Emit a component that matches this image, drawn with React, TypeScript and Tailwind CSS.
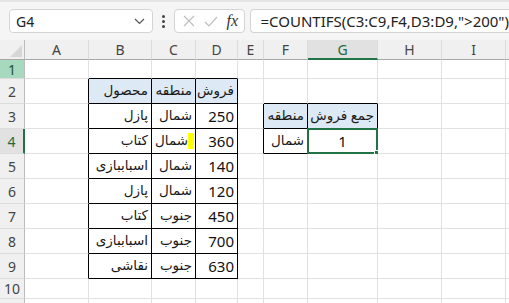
import React from 'react'

const COLS = ['', 'A', 'B', 'C', 'D', 'E', 'F', 'G', 'H', 'I', '']
const ROWS = [1, 2, 3, 4, 5, 6, 7, 8, 9, 10, 11]

// cell contents keyed "row-col" (col index: 1 = A)
const data: Record<string, string> = {
  '2-2': 'محصول', '2-3': 'منطقه', '2-4': 'فروش',
  '3-2': 'پازل', '3-3': 'شمال', '3-4': '250',
  '4-2': 'کتاب', '4-3': 'شمال', '4-4': '360',
  '5-2': 'اسباببازی', '5-3': 'شمال', '5-4': '140',
  '6-2': 'پازل', '6-3': 'شمال', '6-4': '120',
  '7-2': 'کتاب', '7-3': 'جنوب', '7-4': '450',
  '8-2': 'اسباببازی', '8-3': 'جنوب', '8-4': '700',
  '9-2': 'نقاشی', '9-3': 'جنوب', '9-4': '630',
  '3-6': 'منطقه', '3-7': 'جمع فروش',
  '4-6': 'شمال', '4-7': '1',
}

const tables = [
  { r1: 2, r2: 9, c1: 2, c2: 4 },
  { r1: 3, r2: 4, c1: 6, c2: 7 },
]

const inTable = (r: number, c: number) =>
  tables.some(t => r >= t.r1 && r <= t.r2 && c >= t.c1 && c <= t.c2)

const isHeaderFill = (r: number, c: number) =>
  (r === 2 && c >= 2 && c <= 4) || (r === 3 && c >= 6 && c <= 7)

const isArabic = (s: string) => /[\u0600-\u06FF]/.test(s)

function Cell({ r, c }: { r: number; c: number }) {
  const text = data[`${r}-${c}`]
  const rightBlack = inTable(r, c) || inTable(r, c + 1)
  const bottomBlack = inTable(r, c) || inTable(r + 1, c)
  const selected = r === 4 && c === 7
  const marked = r === 4 && c === 3

  return (
    <div
      className={`relative flex items-center overflow-visible whitespace-nowrap border-r border-b text-[#111] ${
        rightBlack ? 'border-r-black' : 'border-r-[#e1e1e1]'
      } ${bottomBlack ? 'border-b-black' : 'border-b-[#e1e1e1]'} ${
        isHeaderFill(r, c) ? 'bg-[#dde9f5]' : 'bg-white'
      } ${selected ? 'justify-center' : marked ? 'justify-end pr-[1px]' : 'justify-end pr-[3px]'}`}
    >
      {text && (
        <span
          dir="auto"
          className={`leading-none ${isArabic(text) ? 'text-[13.5px] text-[#1a1a1a]' : 'text-[15px]'}`}
        >
          {text}
        </span>
      )}
      {marked && <span className="inline-block h-[16px] w-[6px] shrink-0 bg-[#ffff00]" />}
      {selected && (
        <div className="pointer-events-none absolute -top-[1px] -left-[1px] right-[-1px] bottom-[-1px] border-2 border-[#217346]">
          <div className="absolute -right-[4px] -bottom-[4px] h-[6px] w-[6px] border border-white bg-[#217346]" />
        </div>
      )}
    </div>
  )
}

export default function App() {
  return (
    <div className="h-[303px] w-[509px] overflow-hidden bg-white font-['Noto_Sans','DejaVu_Sans',sans-serif]">
      {/* نوار فرمول */}
      <div className="flex h-[40px] items-center border-t-2 border-[#e6e6e6] bg-[#f5f5f5] pl-[9px]">
        <div className="flex h-[24px] w-[148px] items-center justify-between rounded-[4px] border border-[#d4d4d4] bg-white pl-[6px] pr-[7px]">
          <span className="text-[14px] text-[#222]">G4</span>
          <svg width="11" height="7" viewBox="0 0 11 7" fill="none" stroke="#555" strokeWidth="1.2">
            <path d="M1 1l4.5 4.5L10 1" />
          </svg>
        </div>
        <div className="mx-[9px] flex flex-col gap-[2px]">
          <span className="h-[3px] w-[3px] rounded-full bg-[#444]" />
          <span className="h-[3px] w-[3px] rounded-full bg-[#444]" />
          <span className="h-[3px] w-[3px] rounded-full bg-[#444]" />
        </div>
        <div className="flex h-[24px] w-[73px] items-center gap-[9px] rounded-[4px] border border-[#d4d4d4] bg-white pl-[8px]">
          <svg width="12" height="12" viewBox="0 0 12 12" stroke="#bdbdbd" strokeWidth="1.2">
            <path d="M1 1l10 10M11 1L1 11" />
          </svg>
          <svg width="14" height="11" viewBox="0 0 14 11" fill="none" stroke="#bdbdbd" strokeWidth="1.2">
            <path d="M1 6l4 4 8-9" />
          </svg>
          <span className="font-['Liberation_Serif',serif] text-[16px] italic text-[#333]">fx</span>
        </div>
        <div className="ml-[5px] flex h-[24px] flex-1 items-center rounded-l-[4px] border border-r-0 border-[#d4d4d4] bg-white pl-[10px]">
          <span className="text-[15px] text-[#222]">=COUNTIFS(C3:C9,F4,D3:D9,"&gt;200")</span>
        </div>
      </div>

      {/* شبکه */}
      <div className="grid grid-cols-[25px_64px_63px_44px_42px_26px_44px_70px_64px_64px_1fr] grid-rows-[20px_19px_25px_25px_25px_25px_25px_25px_25px_25px_20px_20px]">
        {COLS.map((col, c) =>
          c === 0 ? (
            <div key="corner" className="flex items-end justify-end border-r border-b border-r-[#bdbdbd] border-b-[#a8a8a8] bg-[#f0f0f0] p-[2px]">
              <svg width="12" height="12" viewBox="0 0 12 12">
                <path d="M12 0L12 12L0 12Z" fill="#d6d6d6" />
              </svg>
            </div>
          ) : (
            <div
              key={`h${c}`}
              className={`flex items-center justify-center border-r text-[14px] ${
                col === 'G'
                  ? 'border-b-2 border-b-[#217346] bg-[#e1e1e1] text-[#1d6b3f]'
                  : 'border-b border-b-[#a8a8a8] bg-[#f0f0f0] text-[#444]'
              } border-r-[#dcdcdc]`}
            >
              {col}
            </div>
          )
        )}
        {ROWS.map(r => (
          <React.Fragment key={r}>
            <div
              className={`flex items-center justify-center border-b border-b-[#dcdcdc] text-[14px] ${
                r === 1
                  ? 'border-r border-r-[#bdbdbd] bg-[#a6d9bd] text-[#1f4f33]'
                  : r === 4
                  ? 'border-r-2 border-r-[#217346] bg-[#e1e1e1] text-[#1d6b3f]'
                  : 'border-r border-r-[#bdbdbd] bg-[#f0f0f0] text-[#444]'
              }`}
            >
              {r < 11 ? r : ''}
            </div>
            {COLS.slice(1).map((_, i) => (
              <Cell key={`${r}-${i + 1}`} r={r} c={i + 1} />
            ))}
          </React.Fragment>
        ))}
      </div>
    </div>
  )
}
